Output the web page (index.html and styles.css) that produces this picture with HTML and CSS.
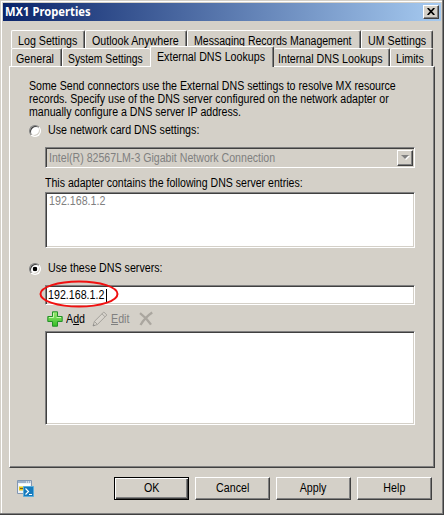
FILE: index.html
```html
<!DOCTYPE html>
<html lang="en">
<head>
<meta charset="utf-8">
<title>MX1 Properties</title>
<link rel="stylesheet" href="styles.css">
</head>
<body>
<main class="window">
  <header class="titlebar">
    <h1 class="title">MX1 Properties</h1>
    <button class="close" aria-label="Close"><svg width="8" height="7" viewBox="0 0 8 7"><path d="M.7 0L7.3 7M7.3 0L.7 7" stroke="#000" stroke-width="1.7"/></svg></button>
  </header>
  <nav class="tabs">
    <div class="tab-row upper">
      <div class="tab log"><span class="t">Log Settings</span></div>
      <div class="tab outlook"><span class="t">Outlook Anywhere</span></div>
      <div class="tab messaging"><span class="t">Messaging Records Management</span></div>
      <div class="tab um"><span class="t">UM Settings</span></div>
    </div>
    <div class="tab-row lower">
      <div class="tab general"><span class="t">General</span></div>
      <div class="tab system"><span class="t">System Settings</span></div>
      <div class="tab external selected"><span class="t">External DNS Lookups</span></div>
      <div class="tab internal"><span class="t">Internal DNS Lookups</span></div>
      <div class="tab limits"><span class="t">Limits</span></div>
    </div>
  </nav>
  <section class="panel">
    <p class="intro"><span class="t">Some Send connectors use the External DNS settings to resolve MX resource<br>records. Specify use of the DNS server configured on the network adapter or<br>manually configure a DNS server IP address.</span></p>
    <div class="choice"><span class="radio"></span><span class="t">Use network card DNS settings:</span></div>
    <div class="field combo"><span class="t">Intel(R) 82567LM-3 Gigabit Network Connection</span><span class="drop"><svg width="9" height="6" viewBox="0 0 9 6"><path d="M1 1h8L5 5z" fill="#fff"/><path d="M0 0h8L4 4z" fill="#808080"/></svg></span></div>
    <div class="label"><span class="t">This adapter contains the following DNS server entries:</span></div>
    <div class="field entries"><span class="t">192.168.1.2</span></div>
    <div class="choice second"><span class="radio on"></span><span class="t">Use these DNS servers:</span></div>
    <div class="field address"><span class="t">192.168.1.2</span><i class="caret"></i>
      <svg class="ring" width="80" height="28" viewBox="0 0 80 28"><ellipse cx="40" cy="14" rx="38.5" ry="12.6" fill="none" stroke="#f01010" stroke-width="2"/></svg>
    </div>
    <div class="toolbar">
      <svg class="plus" width="16" height="16" viewBox="0 0 16 16"><defs><linearGradient id="g" x2="0" y2="1"><stop stop-color="#9bea73"/><stop offset="1" stop-color="#35bd27"/></linearGradient></defs><path d="M5.5.8h5v4.7h4.7v5h-4.7v4.7h-5v-4.7H.8v-5h4.7z" fill="url(#g)" stroke="#239128" stroke-linejoin="round"/><path d="M6.5 2v4.5H2M9.5 6.5H14" fill="none" stroke="#c6f8ae"/></svg>
      <span class="t add">A<u>d</u>d</span>
      <svg class="pencil" width="16" height="16" viewBox="0 0 16 16"><path d="M1 15l1.4-4.6L11.8 1l3 3-9.400 9.500zM2.400 10.400l3 3M10 2.800l3 3" fill="#d8d4cd" stroke="#a4a19b"/><path d="M1 15l.6-2 1.400 1.400z" fill="#888"/></svg>
      <span class="t edit"><u>E</u>dit</span>
      <svg class="cross" width="16" height="16" viewBox="0 0 16 16"><path d="M2 2.200c4 3 8 7 11 11.500M14.200 1.500C9 5 5.400 9 2.500 14" fill="none" stroke="#aaa69f" stroke-width="2.300"/></svg>
    </div>
    <div class="field servers"></div>
  </section>
  <footer class="actions">
    <svg class="shell" width="17" height="17" viewBox="0 0 17 17"><path d="M.5.5h14v13H.5z" fill="#edf2f7" stroke="#8197b3"/><path d="M1 1h13v2H1z" fill="#9db1ca"/><path d="M9 2h1M11 2h1M13 2h1" stroke="#fff"/><path d="M2 4h11v2H2z" fill="#fff"/><path d="M2 7.500h10M2 9.500h5" stroke="#e8c81c" stroke-width="2"/><path d="M3 8.500h4" stroke="#765e22"/><path d="M6.500 6.500h10v10h-10z" fill="#167abc" stroke="#5aaddb"/><path d="M8.500 8.500l3 3-3 3M12 14.500h3" fill="none" stroke="#fff" stroke-width="1.200"/></svg>
    <button class="btn default"><span class="t">OK</span></button>
    <button class="btn"><span class="t">Cancel</span></button>
    <button class="btn"><span class="t">Apply</span></button>
    <button class="btn"><span class="t">Help</span></button>
  </footer>
</main>
</body>
</html>
```
FILE: styles.css
```css
* { box-sizing: border-box; }
body { margin: 0; font: 12px/13px "Liberation Sans", Arial, sans-serif; color: #000; background: #d4d0c8; }
.window { width: 444px; height: 515px; padding: 3px 3px 0; background: #d4d0c8; box-shadow: inset -1px -1px #404040, inset -2px -2px #808080, inset 1px 1px #d4d0c8, inset 2px 2px #fff; }
.t { display: inline-block; flex: none; white-space: nowrap; transform: scaleX(.89); transform-origin: 0 50%; }
.titlebar { height: 18px; display: flex; align-items: center; justify-content: space-between; padding: 0 2px; background: linear-gradient(90deg, #0a246a, #a6caf0); }
.title { margin: 0; font: bold 12px/18px "Noto Sans", sans-serif; color: #fff; white-space: nowrap; transform: scaleX(.935); transform-origin: 0 50%; }
.close { width: 16px; height: 14px; padding: 0 0 1px; display: flex; align-items: center; justify-content: center; background: #d4d0c8; border: 1px solid; border-color: #fff #404040 #404040 #fff; box-shadow: inset -1px -1px #808080; }
.tabs { padding: 9px 0 0 8px; }
.tab-row { display: flex; height: 18px; align-items: flex-end; }
.tab { height: 18px; padding: 4px 0 0 6px; border: 1px solid; border-color: #fff #404040 transparent #fff; border-bottom: 0; border-radius: 2px 2px 0 0; box-shadow: inset -1px 0 #808080; }
.log { width: 74px; }
.outlook { width: 102px; }
.messaging { width: 174px; padding-left: 6px; }
.messaging .t { transform: scaleX(.878); }
.um { width: 72px; }
.general { width: 51px; padding-left: 4px; }
.system { width: 88px; padding-left: 5px; box-shadow: none; border-right: 0; }
.system .t { transform: scaleX(.86); }
.external { width: 124px; }
.internal { width: 116px; padding-left: 4px; border-left: 0; }
.limits { width: 43px; padding-left: 5px; }
.selected { height: 21px; margin-bottom: -1px; padding-top: 4px; background: #d4d0c8; position: relative; }
.panel { width: 426px; height: 402px; margin-left: 6px; padding: 13px 0 0 19px; border: 1px solid; border-color: #fff #404040 #404040 #fff; box-shadow: inset -1px -1px #808080; }
.intro { margin: 0; height: 39px; }
.intro .t { transform: scaleX(.884); }
.choice { display: flex; align-items: center; height: 13px; margin-top: 5px; }
.radio { width: 12px; height: 12px; margin-right: 7px; border-radius: 50%; background: #fff; border: 1px solid; border-color: #808080 #fff #fff #808080; box-shadow: inset 1px 1px #404040, inset -1px -1px #d4d0c8; }
.on { background: radial-gradient(circle, #000 0 2px, #fff 2.6px); }
.field { width: 370px; margin-left: 16px; background: #fff; border: 1px solid; border-color: #808080 #fff #fff #808080; box-shadow: inset 1px 1px #404040, inset -1px -1px #d4d0c8; }
.combo { height: 21px; margin-top: 10px; padding: 2px 1px 1px 3px; display: flex; justify-content: space-between; align-items: center; background: #d4d0c8; color: #808080; }
.combo .t { transform: scaleX(.883); }
.drop { width: 16px; height: 16px; display: flex; align-items: center; justify-content: center; border: 1px solid; border-color: #fff #404040 #404040 #fff; box-shadow: inset -1px -1px #808080; }
.label { margin: 9px 0 0 16px; height: 13px; }
.label .t { transform: scaleX(.88); }
.entries { height: 56px; margin-top: 2px; padding: 2px 3px; color: #808080; }
.second { margin-top: 14px; }
.address { height: 20px; margin-top: 10px; padding: 3px 2px; display: flex; position: relative; }
.caret { width: 1px; height: 13px; margin-left: -5px; background: #000; }
.ring { position: absolute; left: -7px; top: -6px; }
.toolbar { display: flex; align-items: center; height: 16px; margin: 6px 0 0 18px; }
.add { width: 19px; margin-left: 3px; }
.pencil { margin-left: 7px; }
.edit { width: 19px; margin-left: 3px; color: #808080; }
.cross { margin-left: 8px; }
.servers { height: 94px; margin-top: 4px; }
.actions { display: flex; align-items: center; margin: 9px 0 0 14px; }
.shell { margin-right: 80px; }
.btn { width: 75px; height: 23px; margin-right: 6px; padding: 0; font: inherit; color: #000; background: #d4d0c8; border: 1px solid; border-color: #fff #404040 #404040 #fff; box-shadow: inset -1px -1px #808080; }
.btn .t { transform-origin: 50% 50%; }
.default { border-color: #000; box-shadow: inset 1px 1px #fff, inset -1px -1px #404040, inset -2px -2px #808080; }
```
